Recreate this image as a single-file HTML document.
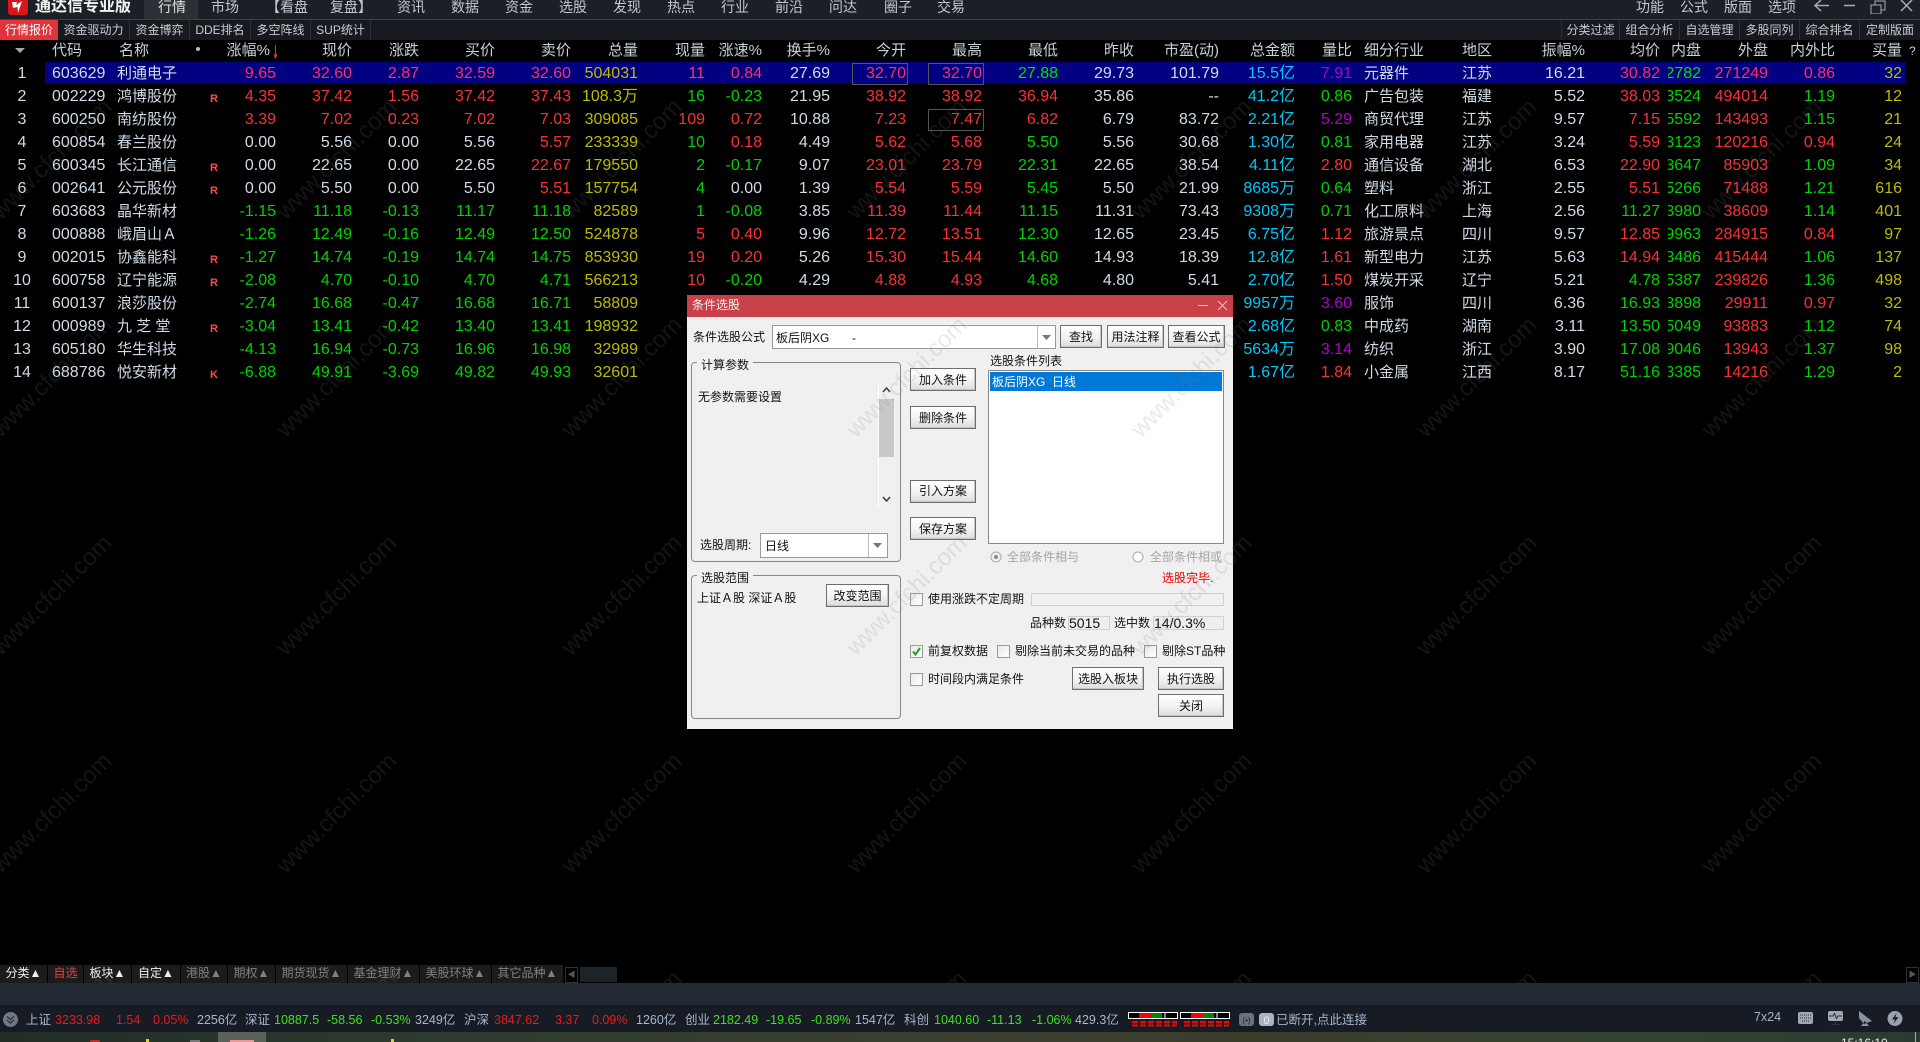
<!DOCTYPE html>
<html lang="zh"><head><meta charset="utf-8"><title>通达信专业版</title>
<style>
html,body{margin:0;padding:0;background:#000}
#p{position:relative;width:1920px;height:1042px;overflow:hidden;background:#000;font-family:"Liberation Sans","Noto Sans CJK SC",sans-serif;color:#d0dbe6}
#p i{font-style:normal;position:absolute;white-space:pre}
.top{position:absolute;left:0;top:0;width:1920px;height:19px;background:#1b2028;border-bottom:1px solid #3b3f46}
.top i{top:-2px;line-height:18px;font-size:14px;color:#c4c8cc}
.tabs{position:absolute;left:0;top:20px;width:1920px;height:20px;background:#16191d}
.tabs i{top:0;height:20px;line-height:20px;font-size:12px;color:#c8ccd0;text-align:center;border-right:1px solid #2c2f33;box-sizing:border-box}
.row{position:absolute;left:0;width:1920px;height:23px;line-height:24px;font-size:16px}
.hd{font-size:15px;color:#c8d0d6;height:22px;line-height:22px;top:40px}
.idx{left:0;width:44px;text-align:center}.code{left:52px}.nm{left:117px;font-size:15px}
.mk{left:210px;top:2px;font-size:11px;font-weight:bold;color:#ff4a4a}
.ind{left:1364px;font-size:15px}.reg{left:1462px;font-size:15px}
.n1,.n2,.n3,.n4,.n5,.n6,.n7,.n8,.n9,.n10,.n11,.n12,.n13,.n14,.n15,.n16,.n17,.n18,.n20,.n21,.n22{width:80px;text-align:right}
.n1{left:196px}.n2{left:272px}.n3{left:339px}.n4{left:415px}.n5{left:491px}.n6{left:558px}.n7{left:625px}.n8{left:682px}.n9{left:750px}.n10{left:826px}.n11{left:902px}.n12{left:978px}.n13{left:1054px}.n14{left:1139px}.n15{left:1215px}.n16{left:1272px}.n17{left:1505px}.n18{left:1580px}.n20{left:1688px}.n21{left:1755px}.n22{left:1822px}
.n19{left:1668px;width:33px;overflow:hidden;display:flex;justify-content:flex-end}
.r{color:#f83234}.g{color:#00d200}.y{color:#bcbc00}.c{color:#00c8f8}.m{color:#b000d0}
.sel{background:#000080}.sel .r{color:#ff2f5f}.sel .g{color:#00e000}
.bx{position:absolute;border:1px solid #555;width:54px;height:20px;top:1px}
#wm{position:absolute;left:0;top:40px;z-index:9;pointer-events:none}
#d{position:absolute;left:687px;top:295px;width:546px;height:434px;background:#f0f0f0;z-index:5;font-size:12px;color:#111}
#d i{line-height:16px}
.t{position:absolute;left:0;top:0;width:546px;height:22px;background:#c84048}
.btn{position:absolute;box-sizing:border-box;border:1px solid #6e6e6e;background:linear-gradient(#fff,#f2f2f2 55%,#dcdcdc);text-align:center;font-size:12px;color:#111;box-shadow:inset -1px -1px 0 #c4c4c4}
.gp{position:absolute;box-sizing:border-box;left:4px;width:210px;border:1px solid #888;border-radius:4px}
.lg{background:#f0f0f0;padding:0 4px}
.fld{position:absolute;box-sizing:border-box;background:#fff;border:1px solid #999}
.ck{position:absolute;box-sizing:border-box;width:13px;height:13px;border:1px solid #999;background:linear-gradient(135deg,#e8e8e8,#fff)}
.ro{position:absolute;box-sizing:border-box;border:1px solid #d0d0d0;background:#f0f0f0}
.lb{position:absolute;left:0;top:965px;height:18px;width:1920px}
.lb i{top:0;height:18px;line-height:17px;font-size:12px;background:#1c1c1c;color:#808080;text-align:center}
.bar{position:absolute;left:0;top:983px;width:1920px;height:22px;background:#232a33}
.st{position:absolute;left:0;top:1005px;width:1920px;height:27px;background:#161b24;font-size:12.5px}
.st i{top:7px;line-height:16px;color:#a8b8cc}
.st .r2{color:#f01818}.st .g2{color:#40e020}
.dk{position:absolute;left:0;top:1032px;width:1920px;height:10px;background:linear-gradient(90deg,#222d24,#2c3a2e 20%,#3c4030 55%,#3a3c2a 65%,#344430 85%,#2a3a30)}
</style></head><body><div id="p">

<div class="top">
<svg style="position:absolute;left:8px;top:0" width="20" height="15"><rect y="-6" width="20" height="21" rx="3" fill="#d8161e"/><path d="M4 2H9L8 5 14 1 10 13 9.5 7 5 8Z" fill="#fff"/></svg>
<i style="left:35px;top:-3px;font-size:16px;font-weight:bold;color:#f2f2f2;line-height:20px">通达信专业版</i>
<div style="position:absolute;left:144px;top:0;width:54px;height:19px;background:#2b2f36"></div>
<i style="left:158px;color:#e0e0e0">行情</i><i style="left:211px">市场</i><i style="left:266px">【看盘</i><i style="left:330px">复盘】</i><i style="left:397px">资讯</i><i style="left:451px">数据</i><i style="left:505px">资金</i><i style="left:559px">选股</i><i style="left:613px">发现</i><i style="left:667px">热点</i><i style="left:721px">行业</i><i style="left:775px">前沿</i><i style="left:829px">问达</i><i style="left:884px">圈子</i><i style="left:937px">交易</i><i style="left:1636px">功能</i><i style="left:1680px">公式</i><i style="left:1724px">版面</i><i style="left:1768px">选项</i>
<svg style="position:absolute;left:1812px;top:0" width="104" height="14" fill="none" stroke="#a8acb2" stroke-width="1.5"><path d="M3 5.5H17M9 0 3 5.5 9 11"/><path d="M32 5.5H43"/><path d="M59 5H69V14H59ZM63 5V1H73V10H69" stroke-width="1"/><path d="M89 0 100 11M100 0 89 11"/></svg>
</div>

<div class="tabs">
<i style="left:0;width:58px;background:#e0343a;color:#fff;border:0">行情报价</i><i style="left:58px;width:72px">资金驱动力</i><i style="left:130px;width:60px">资金博弈</i><i style="left:190px;width:61px">DDE排名</i><i style="left:251px;width:60px">多空阵线</i><i style="left:311px;width:60px">SUP统计</i>
<i style="left:1561px;width:59px;border-left:1px solid #2c2f33">分类过滤</i><i style="left:1620px;width:60px">组合分析</i><i style="left:1680px;width:60px">自选管理</i><i style="left:1740px;width:60px">多股同列</i><i style="left:1800px;width:60px">综合排名</i><i style="left:1860px;width:60px;border:0">定制版面</i>
</div>

<div class="row hd">
<svg style="position:absolute;left:15px;top:8px" width="11" height="5"><path d="M0 0H10L5 5Z" fill="#aaa"/></svg>
<i class="code" style="font-size:15px">代码</i><i style="left:119px">名称</i><i style="left:196px;top:7px;width:4px;height:4px;border-radius:2px;background:#bbb"></i>
<i class="n1" style="left:190px">涨幅%</i><svg style="position:absolute;left:272px;top:3px" width="7" height="16"><path d="M3.5 2V14M2 11 3.5 15 5 11" fill="none" stroke="#f03030" stroke-width="1"/></svg>
<i class="n2">现价</i><i class="n3">涨跌</i><i class="n4">买价</i><i class="n5">卖价</i><i class="n6">总量</i><i class="n7">现量</i><i class="n8">涨速%</i><i class="n9">换手%</i><i class="n10">今开</i><i class="n11">最高</i><i class="n12">最低</i><i class="n13">昨收</i><i class="n14">市盈(动)</i><i class="n15">总金额</i><i class="n16">量比</i><i class="ind">细分行业</i><i class="reg">地区</i><i class="n17">振幅%</i><i class="n18">均价</i><i style="left:1671px">内盘</i><i class="n20">外盘</i><i class="n21">内外比</i><i class="n22">买量</i><i style="left:1909px;font-size:12px">?</i>
</div>

<div class="row" style="top:62px"><div class="sel" style="position:absolute;left:45px;width:1861px;height:22px"></div></div>
<div class="row sel" style="top:62px;background:none">
<i class="idx">1</i><i class="code">603629</i><i class="nm">利通电子</i><i class="n1 r">9.65</i><i class="n2 r">32.60</i><i class="n3 r">2.87</i><i class="n4 r">32.59</i><i class="n5 r">32.60</i><i class="n6 y">504031</i><i class="n7 r">11</i><i class="n8 r">0.84</i><i class="n9">27.69</i><div class="bx" style="left:852px"></div><i class="n10 r">32.70</i><div class="bx" style="left:928px"></div><i class="n11 r">32.70</i><i class="n12 g">27.88</i><i class="n13">29.73</i><i class="n14">101.79</i><i class="n15 c">15.5亿</i><i class="n16 m">7.91</i><i class="ind">元器件</i><i class="reg">江苏</i><i class="n17">16.21</i><i class="n18 r">30.82</i><i class="n19 g">12782</i><i class="n20 r">271249</i><i class="n21 r">0.86</i><i class="n22 y">32</i></div>
<div class="row" style="top:85px">
<i class="idx">2</i><i class="code">002229</i><i class="nm">鸿博股份</i><i class="mk">R</i><i class="n1 r">4.35</i><i class="n2 r">37.42</i><i class="n3 r">1.56</i><i class="n4 r">37.42</i><i class="n5 r">37.43</i><i class="n6 y">108.3万</i><i class="n7 g">16</i><i class="n8 g">-0.23</i><i class="n9">21.95</i><i class="n10 r">38.92</i><i class="n11 r">38.92</i><i class="n12 r">36.94</i><i class="n13">35.86</i><i class="n14">--</i><i class="n15 c">41.2亿</i><i class="n16 g">0.86</i><i class="ind">广告包装</i><i class="reg">福建</i><i class="n17">5.52</i><i class="n18 r">38.03</i><i class="n19 g">13524</i><i class="n20 r">494014</i><i class="n21 g">1.19</i><i class="n22 y">12</i></div>
<div class="row" style="top:108px">
<i class="idx">3</i><i class="code">600250</i><i class="nm">南纺股份</i><i class="n1 r">3.39</i><i class="n2 r">7.02</i><i class="n3 r">0.23</i><i class="n4 r">7.02</i><i class="n5 r">7.03</i><i class="n6 y">309085</i><i class="n7 r">109</i><i class="n8 r">0.72</i><i class="n9">10.88</i><i class="n10 r">7.23</i><div class="bx" style="left:928px"></div><i class="n11 r">7.47</i><i class="n12 r">6.82</i><i class="n13">6.79</i><i class="n14">83.72</i><i class="n15 c">2.21亿</i><i class="n16 m">5.29</i><i class="ind">商贸代理</i><i class="reg">江苏</i><i class="n17">9.57</i><i class="n18 r">7.15</i><i class="n19 g">15592</i><i class="n20 r">143493</i><i class="n21 g">1.15</i><i class="n22 y">21</i></div>
<div class="row" style="top:131px">
<i class="idx">4</i><i class="code">600854</i><i class="nm">春兰股份</i><i class="n1">0.00</i><i class="n2">5.56</i><i class="n3">0.00</i><i class="n4">5.56</i><i class="n5 r">5.57</i><i class="n6 y">233339</i><i class="n7 g">10</i><i class="n8 r">0.18</i><i class="n9">4.49</i><i class="n10 r">5.62</i><i class="n11 r">5.68</i><i class="n12 g">5.50</i><i class="n13">5.56</i><i class="n14">30.68</i><i class="n15 c">1.30亿</i><i class="n16 g">0.81</i><i class="ind">家用电器</i><i class="reg">江苏</i><i class="n17">3.24</i><i class="n18 r">5.59</i><i class="n19 g">13123</i><i class="n20 r">120216</i><i class="n21 r">0.94</i><i class="n22 y">24</i></div>
<div class="row" style="top:154px">
<i class="idx">5</i><i class="code">600345</i><i class="nm">长江通信</i><i class="mk">R</i><i class="n1">0.00</i><i class="n2">22.65</i><i class="n3">0.00</i><i class="n4">22.65</i><i class="n5 r">22.67</i><i class="n6 y">179550</i><i class="n7 g">2</i><i class="n8 g">-0.17</i><i class="n9">9.07</i><i class="n10 r">23.01</i><i class="n11 r">23.79</i><i class="n12 g">22.31</i><i class="n13">22.65</i><i class="n14">38.54</i><i class="n15 c">4.11亿</i><i class="n16 r">2.80</i><i class="ind">通信设备</i><i class="reg">湖北</i><i class="n17">6.53</i><i class="n18 r">22.90</i><i class="n19 g">13647</i><i class="n20 r">85903</i><i class="n21 g">1.09</i><i class="n22 y">34</i></div>
<div class="row" style="top:177px">
<i class="idx">6</i><i class="code">002641</i><i class="nm">公元股份</i><i class="mk">R</i><i class="n1">0.00</i><i class="n2">5.50</i><i class="n3">0.00</i><i class="n4">5.50</i><i class="n5 r">5.51</i><i class="n6 y">157754</i><i class="n7 g">4</i><i class="n8">0.00</i><i class="n9">1.39</i><i class="n10 r">5.54</i><i class="n11 r">5.59</i><i class="n12 g">5.45</i><i class="n13">5.50</i><i class="n14">21.99</i><i class="n15 c">8685万</i><i class="n16 g">0.64</i><i class="ind">塑料</i><i class="reg">浙江</i><i class="n17">2.55</i><i class="n18 r">5.51</i><i class="n19 g">15266</i><i class="n20 r">71488</i><i class="n21 g">1.21</i><i class="n22 y">616</i></div>
<div class="row" style="top:200px">
<i class="idx">7</i><i class="code">603683</i><i class="nm">晶华新材</i><i class="n1 g">-1.15</i><i class="n2 g">11.18</i><i class="n3 g">-0.13</i><i class="n4 g">11.17</i><i class="n5 g">11.18</i><i class="n6 y">82589</i><i class="n7 g">1</i><i class="n8 g">-0.08</i><i class="n9">3.85</i><i class="n10 r">11.39</i><i class="n11 r">11.44</i><i class="n12 g">11.15</i><i class="n13">11.31</i><i class="n14">73.43</i><i class="n15 c">9308万</i><i class="n16 g">0.71</i><i class="ind">化工原料</i><i class="reg">上海</i><i class="n17">2.56</i><i class="n18 g">11.27</i><i class="n19 g">13980</i><i class="n20 r">38609</i><i class="n21 g">1.14</i><i class="n22 y">401</i></div>
<div class="row" style="top:223px">
<i class="idx">8</i><i class="code">000888</i><i class="nm">峨眉山Ａ</i><i class="n1 g">-1.26</i><i class="n2 g">12.49</i><i class="n3 g">-0.16</i><i class="n4 g">12.49</i><i class="n5 g">12.50</i><i class="n6 y">524878</i><i class="n7 r">5</i><i class="n8 r">0.40</i><i class="n9">9.96</i><i class="n10 r">12.72</i><i class="n11 r">13.51</i><i class="n12 g">12.30</i><i class="n13">12.65</i><i class="n14">23.45</i><i class="n15 c">6.75亿</i><i class="n16 r">1.12</i><i class="ind">旅游景点</i><i class="reg">四川</i><i class="n17">9.57</i><i class="n18 r">12.85</i><i class="n19 g">19963</i><i class="n20 r">284915</i><i class="n21 r">0.84</i><i class="n22 y">97</i></div>
<div class="row" style="top:246px">
<i class="idx">9</i><i class="code">002015</i><i class="nm">协鑫能科</i><i class="mk">R</i><i class="n1 g">-1.27</i><i class="n2 g">14.74</i><i class="n3 g">-0.19</i><i class="n4 g">14.74</i><i class="n5 g">14.75</i><i class="n6 y">853930</i><i class="n7 r">19</i><i class="n8 r">0.20</i><i class="n9">5.26</i><i class="n10 r">15.30</i><i class="n11 r">15.44</i><i class="n12 g">14.60</i><i class="n13">14.93</i><i class="n14">18.39</i><i class="n15 c">12.8亿</i><i class="n16 r">1.61</i><i class="ind">新型电力</i><i class="reg">江苏</i><i class="n17">5.63</i><i class="n18 r">14.94</i><i class="n19 g">13486</i><i class="n20 r">415444</i><i class="n21 g">1.06</i><i class="n22 y">137</i></div>
<div class="row" style="top:269px">
<i class="idx">10</i><i class="code">600758</i><i class="nm">辽宁能源</i><i class="mk">R</i><i class="n1 g">-2.08</i><i class="n2 g">4.70</i><i class="n3 g">-0.10</i><i class="n4 g">4.70</i><i class="n5 g">4.71</i><i class="n6 y">566213</i><i class="n7 r">10</i><i class="n8 g">-0.20</i><i class="n9">4.29</i><i class="n10 r">4.88</i><i class="n11 r">4.93</i><i class="n12 g">4.68</i><i class="n13">4.80</i><i class="n14">5.41</i><i class="n15 c">2.70亿</i><i class="n16 r">1.50</i><i class="ind">煤炭开采</i><i class="reg">辽宁</i><i class="n17">5.21</i><i class="n18 g">4.78</i><i class="n19 g">15387</i><i class="n20 r">239826</i><i class="n21 g">1.36</i><i class="n22 y">498</i></div>
<div class="row" style="top:292px">
<i class="idx">11</i><i class="code">600137</i><i class="nm">浪莎股份</i><i class="n1 g">-2.74</i><i class="n2 g">16.68</i><i class="n3 g">-0.47</i><i class="n4 g">16.68</i><i class="n5 g">16.71</i><i class="n6 y">58809</i><i class="n15 c">9957万</i><i class="n16 m">3.60</i><i class="ind">服饰</i><i class="reg">四川</i><i class="n17">6.36</i><i class="n18 g">16.93</i><i class="n19 g">13898</i><i class="n20 r">29911</i><i class="n21 r">0.97</i><i class="n22 y">32</i></div>
<div class="row" style="top:315px">
<i class="idx">12</i><i class="code">000989</i><i class="nm">九 芝 堂</i><i class="mk">R</i><i class="n1 g">-3.04</i><i class="n2 g">13.41</i><i class="n3 g">-0.42</i><i class="n4 g">13.40</i><i class="n5 g">13.41</i><i class="n6 y">198932</i><i class="n15 c">2.68亿</i><i class="n16 g">0.83</i><i class="ind">中成药</i><i class="reg">湖南</i><i class="n17">3.11</i><i class="n18 g">13.50</i><i class="n19 g">15049</i><i class="n20 r">93883</i><i class="n21 g">1.12</i><i class="n22 y">74</i></div>
<div class="row" style="top:338px">
<i class="idx">13</i><i class="code">605180</i><i class="nm">华生科技</i><i class="n1 g">-4.13</i><i class="n2 g">16.94</i><i class="n3 g">-0.73</i><i class="n4 g">16.96</i><i class="n5 g">16.98</i><i class="n6 y">32989</i><i class="n15 c">5634万</i><i class="n16 m">3.14</i><i class="ind">纺织</i><i class="reg">浙江</i><i class="n17">3.90</i><i class="n18 g">17.08</i><i class="n19 g">19046</i><i class="n20 r">13943</i><i class="n21 g">1.37</i><i class="n22 y">98</i></div>
<div class="row" style="top:361px">
<i class="idx">14</i><i class="code">688786</i><i class="nm">悦安新材</i><i class="mk">K</i><i class="n1 g">-6.88</i><i class="n2 g">49.91</i><i class="n3 g">-3.69</i><i class="n4 g">49.82</i><i class="n5 g">49.93</i><i class="n6 y">32601</i><i class="n15 c">1.67亿</i><i class="n16 r">1.84</i><i class="ind">小金属</i><i class="reg">江西</i><i class="n17">8.17</i><i class="n18 g">51.16</i><i class="n19 g">13385</i><i class="n20 r">14216</i><i class="n21 g">1.29</i><i class="n22 y">2</i></div>

<div id="d">
<div class="t"><i style="left:5px;top:2px;color:#f4f4f4">条件选股</i>
<svg style="position:absolute;left:511px;top:5px" width="30" height="12" fill="none" stroke="#eec8c8" stroke-width="1"><path d="M0 5.5H10M20 1 29 10M29 1 20 10"/></svg></div>

<i style="left:6px;top:34px">条件选股公式</i>
<div class="fld" style="left:85px;top:30px;width:284px;height:24px"><i style="left:3px;top:4px">板后阴XG</i><i style="left:79px;top:4px">-</i><div style="position:absolute;right:17px;top:0;height:22px;width:1px;background:#bbb"></div><svg style="position:absolute;right:4px;top:9px" width="9" height="5"><path d="M0 0H9L4.5 5Z" fill="#777"/></svg></div>
<div class="btn" style="left:373px;top:30px;width:42px;height:23px;line-height:22px">查找</div>
<div class="btn" style="left:420px;top:30px;width:57px;height:23px;line-height:22px">用法注释</div>
<div class="btn" style="left:481px;top:30px;width:57px;height:23px;line-height:22px">查看公式</div>

<div class="gp" style="top:67px;height:200px"></div>
<i class="lg" style="left:10px;top:62px">计算参数</i>
<i style="left:11px;top:94px">无参数需要设置</i>
<div style="position:absolute;left:191px;top:87px;width:1px;height:125px;background:#fff"></div>
<div style="position:absolute;left:192px;top:104px;width:15px;height:58px;background:#c8c8c8"></div>
<svg style="position:absolute;left:195px;top:92px" width="9" height="6" fill="none" stroke="#444" stroke-width="1.6"><path d="M1 5 4.5 1 8 5"/></svg>
<svg style="position:absolute;left:195px;top:201px" width="9" height="6" fill="none" stroke="#444" stroke-width="1.6"><path d="M1 1 4.5 5 8 1"/></svg>
<i style="left:13px;top:242px">选股周期:</i>
<div class="fld" style="left:73px;top:238px;width:128px;height:25px"><i style="left:4px;top:4px">日线</i><div style="position:absolute;right:18px;top:0;height:23px;width:1px;background:#bbb"></div><svg style="position:absolute;right:5px;top:9px" width="9" height="5"><path d="M0 0H9L4.5 5Z" fill="#777"/></svg></div>

<div class="gp" style="top:280px;height:144px"></div>
<i class="lg" style="left:10px;top:275px">选股范围</i>
<i style="left:10px;top:295px">上证Ａ股 深证Ａ股</i>
<div class="btn" style="left:139px;top:289px;width:63px;height:23px;line-height:22px">改变范围</div>

<div class="btn" style="left:223px;top:73px;width:66px;height:23px;line-height:22px">加入条件</div>
<div class="btn" style="left:223px;top:111px;width:66px;height:23px;line-height:22px">删除条件</div>
<div class="btn" style="left:223px;top:185px;width:66px;height:23px;line-height:21px">引入方案</div>
<div class="btn" style="left:223px;top:222px;width:66px;height:23px;line-height:22px">保存方案</div>

<i style="left:303px;top:58px">选股条件列表</i>
<div class="fld" style="left:301px;top:75px;width:236px;height:174px;border-color:#888"></div>
<div style="position:absolute;left:303px;top:77px;width:232px;height:19px;background:#0078d7"></div>
<i style="left:305px;top:79px;color:#fff">板后阴XG  日线</i>

<svg style="position:absolute;left:303px;top:256px" width="12" height="12"><circle cx="6" cy="6" r="5" fill="#f0f0f0" stroke="#aaa"/><circle cx="6" cy="6" r="2" fill="#888"/></svg>
<i style="left:320px;top:254px;color:#a4a4a4">全部条件相与</i>
<svg style="position:absolute;left:445px;top:256px" width="12" height="12"><circle cx="6" cy="6" r="5" fill="#fff" stroke="#aaa"/></svg>
<i style="left:463px;top:254px;color:#a4a4a4">全部条件相或</i>
<i style="left:475px;top:275px;color:#f00000">选股完毕.</i>

<div class="ck" style="left:223px;top:298px"></div><i style="left:241px;top:296px">使用涨跌不定周期</i>
<div class="ro" style="left:344px;top:298px;width:193px;height:13px"></div>
<i style="left:343px;top:320px">品种数</i><div class="ro" style="left:381px;top:321px;width:42px;height:14px;background:#eee"></div><i style="left:382px;top:320px;font-size:14px">5015</i>
<i style="left:427px;top:320px">选中数</i><div class="ro" style="left:466px;top:321px;width:71px;height:14px;background:#eee"></div><i style="left:467px;top:320px;font-size:14px">14/0.3%</i>

<div class="ck" style="left:223px;top:350px"></div>
<svg style="position:absolute;left:224px;top:351px" width="11" height="11" fill="none" stroke="#20a020" stroke-width="2"><path d="M2 5.5 4.5 8.5 9 2"/></svg>
<i style="left:241px;top:348px">前复权数据</i>
<div class="ck" style="left:310px;top:350px"></div><i style="left:328px;top:348px">剔除当前未交易的品种</i>
<div class="ck" style="left:457px;top:350px"></div><i style="left:475px;top:348px">剔除ST品种</i>
<div class="ck" style="left:223px;top:378px"></div><i style="left:241px;top:376px">时间段内满足条件</i>
<div class="btn" style="left:385px;top:372px;width:72px;height:23px;line-height:22px">选股入板块</div>
<div class="btn" style="left:471px;top:372px;width:66px;height:23px;line-height:22px">执行选股</div>
<div class="btn" style="left:471px;top:399px;width:66px;height:23px;line-height:22px">关闭</div>
</div>

<svg id="wm" width="1920" height="943"><defs><pattern id="w" patternUnits="userSpaceOnUse" x="-90" y="11" width="285" height="218"><text transform="translate(142.5 109) rotate(-45)" text-anchor="middle" dominant-baseline="middle" font-family="Liberation Sans" font-size="24" fill="#808080" fill-opacity=".16">www.cfchi.com</text></pattern></defs><rect width="1920" height="943" fill="url(#w)"/></svg>

<div class="lb">
<i style="left:0;width:47px;color:#eee">分类▲</i><i style="left:48px;width:35px;color:#f03c3c">自选</i><i style="left:84px;width:47px;color:#eee">板块▲</i><i style="left:132px;width:48px;color:#eee">自定▲</i><i style="left:181px;width:46px">港股▲</i><i style="left:228px;width:47px">期权▲</i><i style="left:276px;width:71px">期货现货▲</i><i style="left:348px;width:71px">基金理财▲</i><i style="left:420px;width:71px">美股环球▲</i><i style="left:492px;width:71px">其它品种▲</i>
<i style="left:565px;width:11px;height:14px;top:2px;background:#000;border:1px solid #2c3238;font-size:8px;line-height:14px;color:#555">◀</i>
<i style="left:580px;width:37px;top:2px;height:15px;background:#1e2328"></i>
<i style="left:1906px;width:11px;height:14px;top:2px;background:#000;border:1px solid #2c3238;font-size:8px;line-height:14px;color:#555">▶</i>
</div>
<div class="bar"></div>
<div class="st">
<svg style="position:absolute;left:3px;top:7px" width="15" height="15"><circle cx="7.5" cy="7.5" r="7.5" fill="#6e7886"/><path d="M4 4.5 7.5 7.5 11 4.5M4 8 7.5 11 11 8" fill="none" stroke="#222" stroke-width="1.1"/></svg>
<i style="left:26px">上证</i><i class="r2" style="left:55px">3233.98</i><i class="r2" style="left:116px">1.54</i><i class="r2" style="left:153px">0.05%</i><i style="left:197px">2256亿</i>
<i style="left:245px">深证</i><i class="g2" style="left:274px">10887.5</i><i class="g2" style="left:327px">-58.56</i><i class="g2" style="left:371px">-0.53%</i><i style="left:415px">3249亿</i>
<i style="left:464px">沪深</i><i class="r2" style="left:494px">3847.62</i><i class="r2" style="left:555px">3.37</i><i class="r2" style="left:592px">0.09%</i><i style="left:636px">1260亿</i>
<i style="left:685px">创业</i><i class="g2" style="left:713px">2182.49</i><i class="g2" style="left:766px">-19.65</i><i class="g2" style="left:811px">-0.89%</i><i style="left:855px">1547亿</i>
<i style="left:904px">科创</i><i class="g2" style="left:934px">1040.60</i><i class="g2" style="left:987px">-11.13</i><i class="g2" style="left:1032px">-1.06%</i><i style="left:1075px">429.3亿</i>
<svg style="position:absolute;left:1128px;top:7px" width="102" height="15"><rect x=".5" y=".5" width="49" height="6" fill="#000" stroke="#fff"/><rect x="11" y="1" width="13" height="5" fill="#f00"/><rect x="24" y="1" width="10" height="5" fill="#080"/><path d="M37 0V7" stroke="#fff"/><rect x="52.5" y=".5" width="49" height="6" fill="#000" stroke="#fff"/><rect x="63" y="1" width="13" height="5" fill="#f00"/><rect x="76" y="1" width="10" height="5" fill="#080"/><path d="M89 0V7" stroke="#fff"/><path d="M4 10H49M4 13.500H49M56 10H101M56 13.500H101" stroke="#f00" stroke-width="2" stroke-dasharray="6 2"/></svg>
<svg style="position:absolute;left:1239px;top:8px" width="36" height="13"><rect width="15" height="13" rx="3" fill="#6a7280"/><text x="7.5" y="10" font-size="8" text-anchor="middle" fill="#222" font-family="Liberation Sans">(•)</text><rect x="20" width="15" height="13" rx="3" fill="#a8b4c4"/><text x="27.500" y="11" font-size="11" text-anchor="middle" fill="#eee" font-family="Liberation Sans">0</text></svg>
<i style="left:1276px">已断开,点此连接</i>
<i style="left:1754px;top:4px">7x24</i>
<svg style="position:absolute;left:1798px;top:6px" width="108" height="16"><rect y="1" width="15" height="12" rx="2" fill="#a0a8b4"/><path d="M2 4H13M2 7H13M4 10H11" stroke="#2a3038" stroke-dasharray="1 1"/><rect x="30" y="0" width="15" height="10" rx="2" fill="#a0a8b4"/><path d="M31 5H35L36.500 2.500 38.500 7.500 40 5H44M37.500 10V13M33 13.500H42" stroke="#2a3038" fill="none"/><path d="M61 0 74 10 66 13 61 7ZM63 15H71L67 10Z" fill="#8a929e"/><circle cx="97" cy="7.500" r="7.500" fill="#9aa2ae"/><path d="M98.500 2 94 8.500H97L95.500 13 100.500 6H97.500Z" fill="#222"/></svg>
</div>
<div class="dk">
<div style="position:absolute;left:218px;top:0;width:48px;height:10px;background:#5a6258"></div>
<div style="position:absolute;left:230px;top:8px;width:24px;height:2px;background:#e89a9a"></div>
<div style="position:absolute;left:90px;top:8px;width:10px;height:2px;background:#b03030;border-radius:2px 2px 0 0"></div>
<div style="position:absolute;left:146px;top:7px;width:3px;height:3px;background:#d8d040"></div>
<div style="position:absolute;left:190px;top:8px;width:10px;height:2px;background:#777"></div>
<div style="position:absolute;left:391px;top:7px;width:3px;height:3px;background:#d8d040"></div>
<div style="position:absolute;left:1915px;top:0;width:1px;height:10px;background:#aaa"></div>
<i style="left:1841px;top:4px;font-size:12px;color:#e8e8e8;line-height:14px">15:16:10</i>
</div>
</div></body></html>
